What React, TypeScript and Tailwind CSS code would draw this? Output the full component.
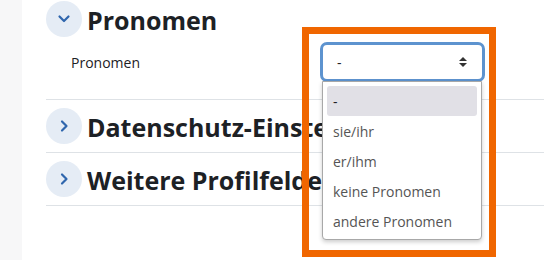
import React from "react";

function Chevron({ open }: { open: boolean }) {
  return (
    <div className="w-9 h-9 rounded-full bg-[#e5ecf5] flex items-center justify-center shrink-0">
      <svg width="14" height="14" viewBox="0 0 14 14" fill="none">
        {open ? (
          <path d="M2.5 4.5 L7 9 L11.5 4.5" stroke="#2f66ad" strokeWidth="2.2" strokeLinecap="round" strokeLinejoin="round" />
        ) : (
          <path d="M5 2.5 L9.5 7 L5 11.5" stroke="#2f66ad" strokeWidth="2.2" strokeLinecap="round" strokeLinejoin="round" />
        )}
      </svg>
    </div>
  );
}

function Header({ title, open }: { title: string; open: boolean }) {
  return (
    <div className="flex items-center gap-[5px] h-9">
      <Chevron open={open} />
      <h3 className="text-[25px] font-bold text-[#1d2125] leading-none whitespace-nowrap mt-[3px]">{title}</h3>
    </div>
  );
}

export default function App() {
  const items = ["-", "sie/ihr", "er/ihm", "keine Pronomen", "andere Pronomen"];
  return (
    <div
      className="relative w-[544px] h-[260px] overflow-hidden bg-white flex"
      style={{ fontFamily: '"Open Sans", "Noto Sans", sans-serif' }}
    >
      <div className="w-[22px] h-full bg-[#f7f7f8] shrink-0" />
      <div className="flex-1 pl-[24px] pt-[1px]">
        <div className="border-b border-[#dee2e6] pb-[17px]">
          <Header title="Pronomen" open={true} />
          <div className="flex items-center mt-[5px]">
            <div className="w-[274px] pl-[25px] text-[14px] text-[#1d2125]">Pronomen</div>
            <div className="w-[165px] h-[40px] rounded-[7px] border-[3px] border-[#5d93cf] bg-white flex items-center justify-between pl-[14px] pr-[14px] text-[14px] text-[#1d2125]">
              <span>-</span>
              <svg width="10" height="12" viewBox="0 0 10 12">
                <path d="M1 5 L5 1 L9 5 Z" fill="#333" />
                <path d="M1 7 L5 11 L9 7 Z" fill="#333" />
              </svg>
            </div>
          </div>
        </div>
        <div className="border-b border-[#dee2e6] pt-[8px] pb-[8px]">
          <Header title="Datenschutz-Einstellungen" open={false} />
        </div>
        <div className="border-b border-[#dee2e6] pt-[8px] pb-[8px]">
          <Header title="Weitere Profilfelder" open={false} />
        </div>
      </div>

      {/* dropdown list */}
      <div className="absolute left-[322px] top-[81px] w-[160px] h-[159px] bg-white border border-[#a8a8a8] rounded-b-[4px] shadow-[0_2px_4px_rgba(0,0,0,0.2)] px-[4px] pt-[4px]">
        {items.map((it, i) => (
          <div
            key={it}
            className={
              i === 0
                ? "h-[30px] flex items-center pl-[6px] text-[14px] rounded-[3px] bg-[#e1e0e6] text-[#1d2125]"
                : "h-[30px] flex items-center pl-[6px] text-[14px] text-[#555555]"
            }
          >
            {it}
          </div>
        ))}
      </div>

      {/* orange annotation box */}
      <div className="absolute left-[302px] top-[27px] w-[194px] h-[230px] border-[7px] border-[#f06600] pointer-events-none" />
    </div>
  );
}
